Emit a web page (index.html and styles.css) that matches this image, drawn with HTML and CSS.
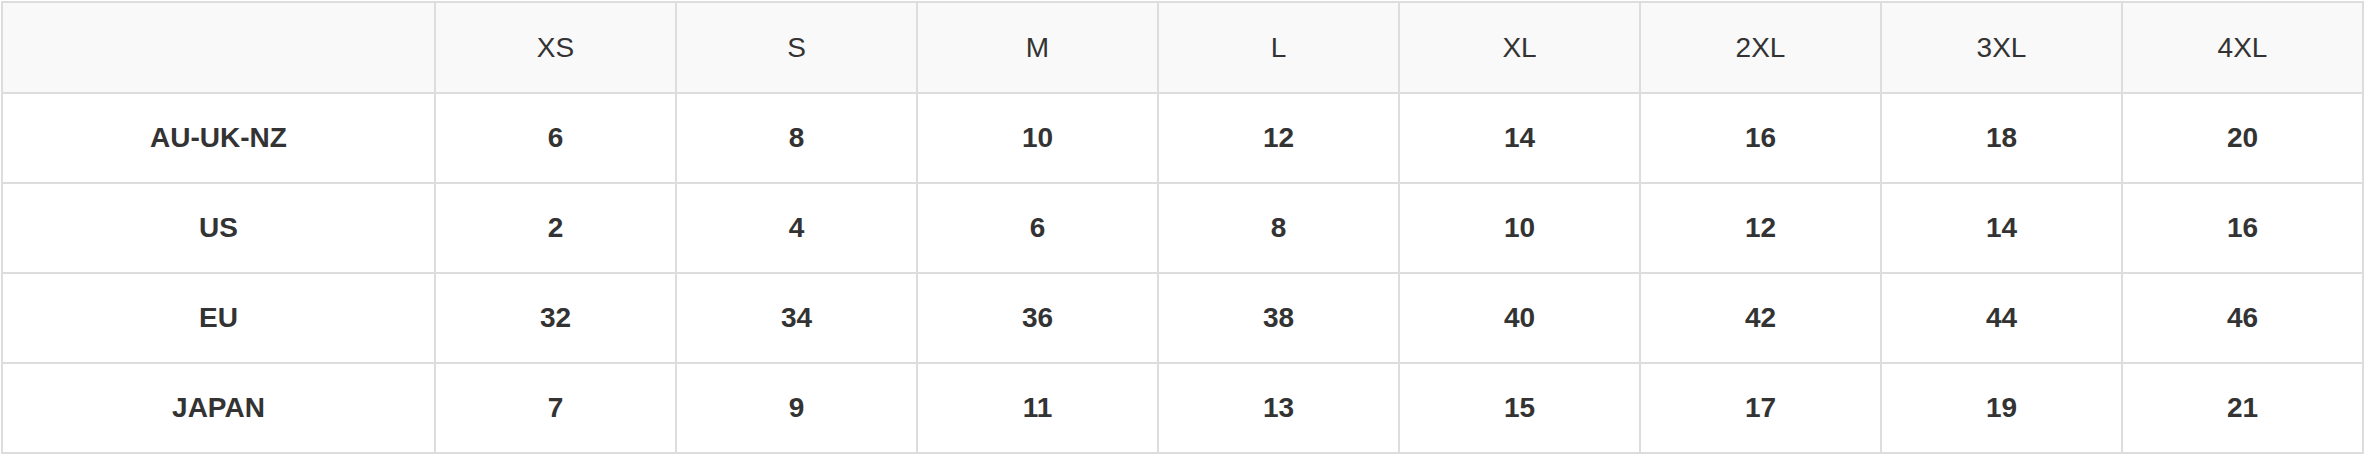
FILE: index.html
```html
<!DOCTYPE html>
<html>
<head>
<meta charset="utf-8">
<link rel="stylesheet" href="styles.css">
</head>
<body>
<div class="wrap">
<table class="size-table">
<colgroup>
<col class="col-label">
<col class="col-size"><col class="col-size"><col class="col-size"><col class="col-size">
<col class="col-size"><col class="col-size"><col class="col-size"><col class="col-size">
</colgroup>
<thead>
<tr class="head-row">
<th></th><th>XS</th><th>S</th><th>M</th><th>L</th><th>XL</th><th>2XL</th><th>3XL</th><th>4XL</th>
</tr>
</thead>
<tbody>
<tr class="body-row"><td>AU-UK-NZ</td><td>6</td><td>8</td><td>10</td><td>12</td><td>14</td><td>16</td><td>18</td><td>20</td></tr>
<tr class="body-row"><td>US</td><td>2</td><td>4</td><td>6</td><td>8</td><td>10</td><td>12</td><td>14</td><td>16</td></tr>
<tr class="body-row"><td>EU</td><td>32</td><td>34</td><td>36</td><td>38</td><td>40</td><td>42</td><td>44</td><td>46</td></tr>
<tr class="body-row"><td>JAPAN</td><td>7</td><td>9</td><td>11</td><td>13</td><td>15</td><td>17</td><td>19</td><td>21</td></tr>
</tbody>
</table>
</div>
</body>
</html>
```
FILE: styles.css
```css
html, body {
  margin: 0;
  padding: 0;
  background: #ffffff;
}
.wrap {
  padding: 1px 0 0 1px;
}
.size-table {
  border-collapse: collapse;
  table-layout: fixed;
  width: 2363px;
  font-family: "Liberation Sans", Arial, Helvetica, sans-serif;
  color: #333333;
}
.col-label { width: 433px; }
.col-size { width: 241px; }
.size-table th,
.size-table td {
  border: 2px solid #dddddd;
  text-align: center;
  vertical-align: middle;
  padding: 0;
}
.head-row th {
  height: 89px;
  background: #f9f9f9;
  font-weight: 400;
  font-size: 28px;
}
.body-row td {
  height: 88px;
  font-weight: 700;
  font-size: 28px;
}
```
